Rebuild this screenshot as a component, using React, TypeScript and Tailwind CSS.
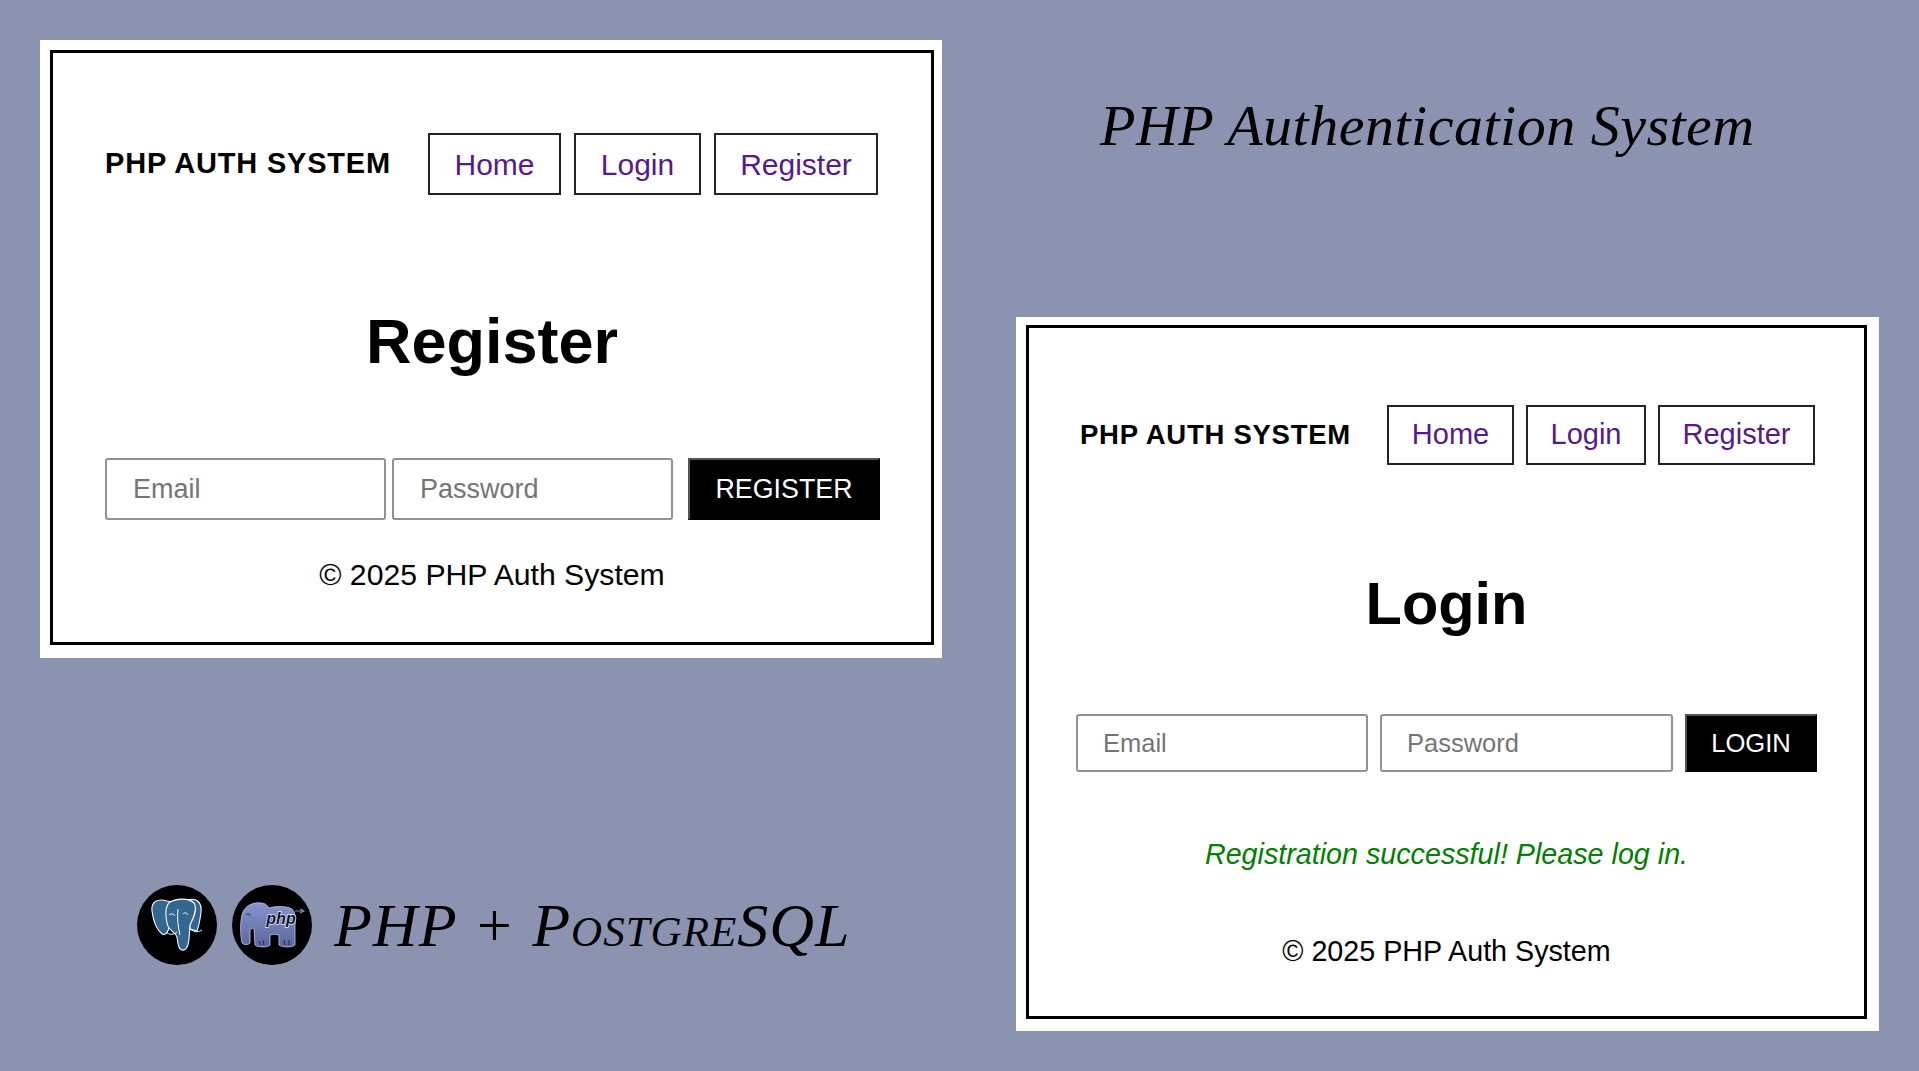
import React from 'react';

const sans = "font-['Liberation_Sans',Arial,sans-serif]";

function PostgresLogo() {
    return (
        <svg viewBox="0 0 80 80" className="w-[80px] h-[80px] shrink-0">
            <circle cx="40" cy="40" r="40" fill="#000" />
            <g fill="#336791" stroke="#fff" strokeWidth="1.1" strokeLinejoin="round">
                <path d="M30 16C20 13 14 17 15 26C16 34 19 44 25 49C30 51 31 46 33 40L36 17Z" />
                <path d="M50 15C60 12 65 18 64 27C63 35 62 41 60 46L53 44Z" />
                <path d="M33 17C40 13 52 13 57 18C61 24 56 34 53 40C52 50 53 62 47 65C41 66 41 58 40 52C38 46 31 46 30 38C28 28 29 20 33 17Z" />
            </g>
            <path d="M53 44C58 48 62 47 65 45M29 47C32 50 37 50 40 47M32 30C34 28 37 29 38 31M46 29C48 27 50 28 51 30M41 24C40 34 41 42 43 50" fill="none" stroke="#fff" strokeWidth="1" />
        </svg>
    );
}

function PhpLogo() {
    return (
        <svg viewBox="0 0 80 80" className="w-[80px] h-[80px] shrink-0">
            <defs>
                <linearGradient id="phpBody" x1="0" y1="0" x2="0" y2="1">
                    <stop offset="0" stopColor="#8a94cc" />
                    <stop offset="1" stopColor="#5b66a0" />
                </linearGradient>
            </defs>
            <circle cx="40" cy="40" r="40" fill="#000" />
            <path d="M63 26L71 26M68 24L72 26L68 28" fill="none" stroke="#7f8ac0" strokeWidth="1.2" />
            <path
                d="M10 58C8 48 8 34 11 27C14 20 22 17 29 18C33 18 35 20 37 23C44 21 55 21 60 24C63 27 64 32 63 40L63 60C60 63 49 62 47 60L47 50C44 49 41 49 38 50L38 60C35 63 25 62 23 60L22 44C20 42 18 44 18 48L18 58C16 60 12 60 10 58Z"
                fill="url(#phpBody)"
                stroke="#c3c9ea"
                strokeWidth="0.8"
            />
            <path d="M27 56L29 60M31 55L32 60M52 55L53 60M57 55L57 60M14 30C16 28 18 29 18 31" fill="none" stroke="#20264a" strokeWidth="1" />
            <text
                x="49"
                y="39"
                textAnchor="middle"
                fontFamily="Liberation Sans, sans-serif"
                fontStyle="italic"
                fontWeight="700"
                fontSize="16"
                fill="#10142e"
                stroke="#e6e9fa"
                strokeWidth="1.4"
                paintOrder="stroke"
            >
                php
            </text>
        </svg>
    );
}

export default function App() {
    return (
        <div className={`${sans} flex w-[1919px] h-[1071px] overflow-hidden bg-[#8b93b0] text-black`}>
            {/* left side */}
            <div className="w-[1016px] shrink-0 pl-[40px] pt-[40px]">
                <div className="w-[902px] h-[618px] bg-white pt-[10px] pl-[10px] pr-[8px] pb-[13px]">
                    <div className="h-full border-[3px] border-black">
                        <div className="flex items-center h-[62px] mt-[80px] pl-[52px]">
                            <span className="w-[323px] text-[29px] font-bold tracking-[0.8px]">PHP AUTH SYSTEM</span>
                            <a href="#" className="flex items-center justify-center w-[133px] h-[62px] border-2 border-[#222] text-[30px] text-[#551a8b]">Home</a>
                            <a href="#" className="flex items-center justify-center w-[127px] h-[62px] ml-[13px] border-2 border-[#222] text-[30px] text-[#551a8b]">Login</a>
                            <a href="#" className="flex items-center justify-center w-[164px] h-[62px] ml-[13px] border-2 border-[#222] text-[30px] text-[#551a8b]">Register</a>
                        </div>
                        <h1 className="h-[72px] mt-[110px] text-center text-[63px] leading-[72px] font-bold">Register</h1>
                        <form className="flex h-[62px] mt-[81px] pl-[52px]">
                            <input placeholder="Email" className="w-[281px] h-full px-[26px] border-2 border-[#929292] rounded-[3px] text-[27px] placeholder-[#757575]" />
                            <input placeholder="Password" className="w-[281px] h-full ml-[6px] px-[26px] border-2 border-[#929292] rounded-[3px] text-[27px] placeholder-[#757575]" />
                            <button type="button" className="w-[192px] h-full ml-[15px] bg-black border-2 border-black border-t-[#555] border-l-[#555] text-white text-[26.8px]">REGISTER</button>
                        </form>
                        <p className="h-[36px] mt-[37px] text-center text-[30.2px] leading-[36px]">© 2025 PHP Auth System</p>
                    </div>
                </div>
                <div className="flex items-center h-[80px] mt-[227px] ml-[97px]">
                    <PostgresLogo />
                    <div className="ml-[15px]"><PhpLogo /></div>
                    <span className="ml-[22px] font-['Liberation_Serif',serif] italic [font-variant:small-caps] text-[62px] leading-none tracking-[1px] whitespace-nowrap">PHP + PostgreSQL</span>
                </div>
            </div>

            {/* right side */}
            <div className="w-[863px] shrink-0">
                <div className="h-[317px] pl-[84px] pt-[88px]">
                    <h2 className="font-['Liberation_Serif',serif] italic font-normal text-[58px] leading-[76px] tracking-[0.5px] whitespace-nowrap">PHP Authentication System</h2>
                </div>
                <div className="w-[863px] h-[714px] bg-white pt-[8px] pl-[10px] pr-[12px] pb-[12px]">
                    <div className="h-full border-[3px] border-black">
                        <div className="flex items-center h-[60px] mt-[77px] pl-[51px]">
                            <span className="w-[307px] text-[27.5px] font-bold tracking-[0.75px]">PHP AUTH SYSTEM</span>
                            <a href="#" className="flex items-center justify-center w-[127px] h-[60px] border-2 border-[#222] text-[29px] text-[#551a8b]">Home</a>
                            <a href="#" className="flex items-center justify-center w-[120px] h-[60px] ml-[12px] border-2 border-[#222] text-[29px] text-[#551a8b]">Login</a>
                            <a href="#" className="flex items-center justify-center w-[157px] h-[60px] ml-[12px] border-2 border-[#222] text-[29px] text-[#551a8b]">Register</a>
                        </div>
                        <h1 className="h-[66px] mt-[106px] text-center text-[59.5px] leading-[66px] font-bold">Login</h1>
                        <form className="flex h-[58px] mt-[77px] pl-[47px]">
                            <input placeholder="Email" className="w-[292px] h-full px-[25px] border-2 border-[#929292] rounded-[3px] text-[25.5px] placeholder-[#757575]" />
                            <input placeholder="Password" className="w-[293px] h-full ml-[12px] px-[25px] border-2 border-[#929292] rounded-[3px] text-[25.5px] placeholder-[#757575]" />
                            <button type="button" className="w-[132px] h-full ml-[12px] bg-black border-2 border-black border-t-[#555] border-l-[#555] text-white text-[25.6px]">LOGIN</button>
                        </form>
                        <p className="h-[34px] mt-[65px] text-center text-[28.7px] leading-[34px] italic text-[#008000]">Registration successful! Please log in.</p>
                        <p className="h-[34px] mt-[63px] text-center text-[28.7px] leading-[34px]">© 2025 PHP Auth System</p>
                    </div>
                </div>
            </div>
        </div>
    );
}
